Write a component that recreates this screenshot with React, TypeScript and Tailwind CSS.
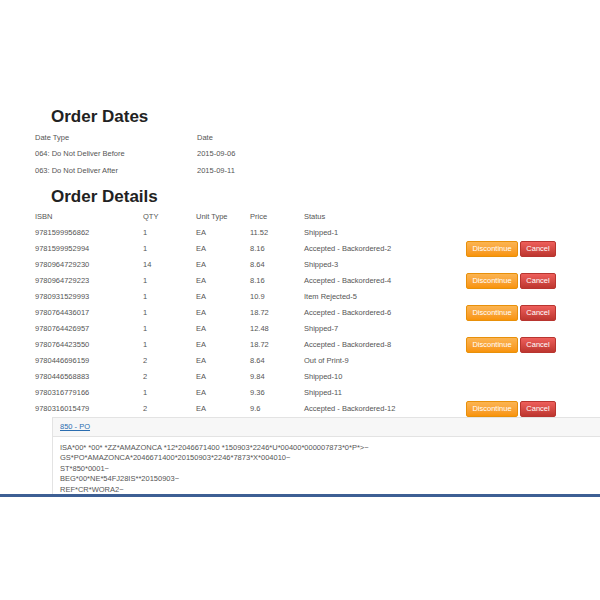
const dates = [
  { type: "064: Do Not Deliver Before", date: "2015-09-06" },
  { type: "063: Do Not Deliver After", date: "2015-09-11" },
];

const items = [
  { isbn: "9781599956862", qty: "1", price: "11.52", status: "Shipped-1", actions: false },
  { isbn: "9781599952994", qty: "1", price: "8.16", status: "Accepted - Backordered-2", actions: true },
  { isbn: "9780964729230", qty: "14", price: "8.64", status: "Shipped-3", actions: false },
  { isbn: "9780964729223", qty: "1", price: "8.16", status: "Accepted - Backordered-4", actions: true },
  { isbn: "9780931529993", qty: "1", price: "10.9", status: "Item Rejected-5", actions: false },
  { isbn: "9780764436017", qty: "1", price: "18.72", status: "Accepted - Backordered-6", actions: true },
  { isbn: "9780764426957", qty: "1", price: "12.48", status: "Shipped-7", actions: false },
  { isbn: "9780764423550", qty: "1", price: "18.72", status: "Accepted - Backordered-8", actions: true },
  { isbn: "9780446696159", qty: "2", price: "8.64", status: "Out of Print-9", actions: false },
  { isbn: "9780446568883", qty: "2", price: "9.84", status: "Shipped-10", actions: false },
  { isbn: "9780316779166", qty: "1", price: "9.36", status: "Shipped-11", actions: false },
  { isbn: "9780316015479", qty: "2", price: "9.6", status: "Accepted - Backordered-12", actions: true },
];

const edi = [
  'ISA*00* *00* *ZZ*AMAZONCA *12*2046671400 *150903*2246*U*00400*000007873*0*P*>~',
  "GS*PO*AMAZONCA*2046671400*20150903*2246*7873*X*004010~",
  "ST*850*0001~",
  "BEG*00*NE*54FJ28IS**20150903~",
  "REF*CR*WORA2~",
];

const Actions = () => (
  <div className="flex gap-[2px]">
    <button className="h-[16px] w-[52px] rounded-[2px] border border-[#e8900a] bg-gradient-to-b from-[#fbb450] to-[#f89406] text-[7.5px] leading-none text-white">
      Discontinue
    </button>
    <button className="h-[16px] w-[36px] rounded-[2px] border border-[#b8352f] bg-gradient-to-b from-[#ee5f5b] to-[#bd362f] text-[7.5px] leading-none text-white">
      Cancel
    </button>
  </div>
);

export default function App() {
  return (
    <div className="w-[600px] h-[600px] overflow-hidden bg-white text-[#555] text-[7.5px] font-['Liberation_Sans',Arial,sans-serif]">
      <div className="h-[494px] pt-[107px]">
        <h1 className="pl-[51px] text-[17px] leading-[20px] font-bold text-[#222]">Order Dates</h1>
        <div className="pl-[35px] pt-[2px]">
          <div className="flex h-[16.5px] items-center">
            <span className="w-[162px]">Date Type</span>
            <span>Date</span>
          </div>
          {dates.map((d) => (
            <div key={d.type} className="flex h-[16.5px] items-center">
              <span className="w-[162px]">{d.type}</span>
              <span>{d.date}</span>
            </div>
          ))}
        </div>
        <h1 className="pl-[51px] pt-[8px] text-[17px] leading-[20px] font-bold text-[#222]">Order Details</h1>
        <div className="pl-[35px] pt-[2px]">
          <div className="flex h-[16px] items-center">
            <span className="w-[108px]">ISBN</span>
            <span className="w-[53px]">QTY</span>
            <span className="w-[54px]">Unit Type</span>
            <span className="w-[54px]">Price</span>
            <span>Status</span>
          </div>
          {items.map((it) => (
            <div key={it.isbn} className="flex h-[16px] items-center">
              <span className="w-[108px]">{it.isbn}</span>
              <span className="w-[53px]">{it.qty}</span>
              <span className="w-[54px]">EA</span>
              <span className="w-[54px]">{it.price}</span>
              <span className="w-[162px]">{it.status}</span>
              {it.actions && <Actions />}
            </div>
          ))}
        </div>
        <div className="ml-[52px] border-t border-l border-[#e3e3e3]">
          <div className="flex h-[19px] items-center border-b border-[#e3e3e3] bg-[#f7f7f7] px-[7px]">
            <a className="text-[#2a6db0] underline">850 - PO</a>
          </div>
          <div className="px-[7px] pt-[6px] leading-[10.5px] whitespace-nowrap">
            {edi.map((l) => (
              <div key={l}>{l}</div>
            ))}
          </div>
        </div>
      </div>
      <div className="h-[3px] bg-[#3d5f94]" />
    </div>
  );
}
